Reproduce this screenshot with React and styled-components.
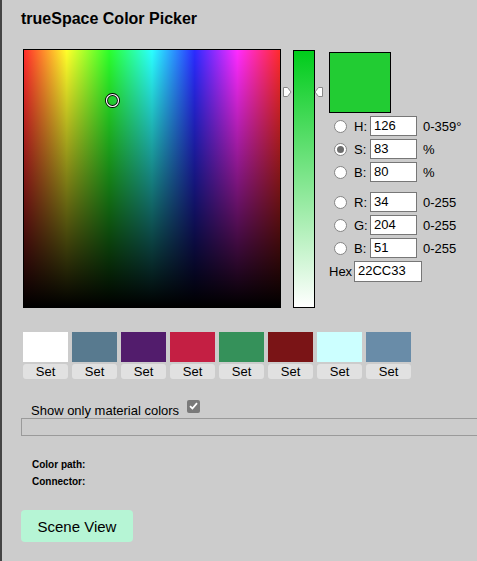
import React from "react";
import styled, { createGlobalStyle } from "styled-components";

const Global = createGlobalStyle`
  html, body { margin: 0; padding: 0; background: #cccccc; overflow: hidden; }
  body { font-family: "Liberation Sans", Arial, sans-serif; color: #000; }
`;

const Page = styled.div`
  min-height: 561px;
  box-sizing: border-box;
  border-left: 2px solid #444444;
  padding-left: 19px;
  overflow: hidden;
`;

const Title = styled.h1`
  margin: 0;
  padding-top: 10px;
  font-size: 16px;
  line-height: 18px;
  font-weight: bold;
`;

const PickerRow = styled.div`
  display: flex;
  align-items: flex-start;
  margin: 21px 0 0 2px;
`;

const Field = styled.div`
  position: relative;
  width: 256px;
  height: 257px;
  border: 1px solid #000;
  background:
    linear-gradient(to bottom, rgba(0,0,0,0), #000),
    linear-gradient(to right,
      rgb(255,43,43) 0%,
      rgb(255,255,43) 16.67%,
      rgb(43,255,43) 33.33%,
      rgb(43,255,255) 50%,
      rgb(43,43,255) 66.67%,
      rgb(255,43,255) 83.33%,
      rgb(255,43,43) 100%);
`;

const Marker = styled.svg`
  position: absolute;
  left: 81px;
  top: 43px;
`;

const SliderWrap = styled.div`
  position: relative;
  margin: 1px 0 0 12px;
  padding: 0;
`;

const Slider = styled.div`
  width: 20px;
  height: 256px;
  border: 1px solid #000;
  background: linear-gradient(to bottom, #00cc1b, #ffffff);
`;

const Arrow = styled.svg`
  position: absolute;
  top: 37px;
  ${(p) => (p.$side === "left" ? "left: -10px;" : "right: -8px;")}
`;

const Side = styled.div`
  display: flex;
  flex-direction: column;
  margin-left: 14px;
  margin-top: 3px;
`;

const Preview = styled.div`
  width: 60px;
  height: 59px;
  border: 1px solid #000;
  background: #22cc33;
  margin-bottom: 3px;
`;

const Row = styled.div`
  display: flex;
  align-items: center;
  height: 20px;
  margin-bottom: 3px;
  margin-top: ${(p) => (p.$gap ? "7px" : "0")};
  font-size: 13px;
`;

const Radio = styled.span`
  box-sizing: border-box;
  width: 13px;
  height: 13px;
  border-radius: 50%;
  border: 1px solid #858585;
  background: #fff;
  margin-left: 5px;
  margin-right: 7px;
  display: flex;
  align-items: center;
  justify-content: center;
  &::after {
    content: "";
    display: ${(p) => (p.$checked ? "block" : "none")};
    width: 7px;
    height: 7px;
    border-radius: 50%;
    background: #6d6d6d;
  }
`;

const Label = styled.span`
  width: 16px;
`;

const Input = styled.div`
  box-sizing: border-box;
  width: ${(p) => p.$w || 47}px;
  height: ${(p) => p.$h || 20}px;
  border: 1px solid #777;
  background: #fff;
  padding: 0 3px;
  font-size: 13px;
  line-height: 18px;
`;

const Unit = styled.span`
  margin-left: 6px;
`;

const HexLabel = styled.span`
  width: 25px;
`;

const Swatches = styled.div`
  display: flex;
  gap: 4px;
  margin: 24px 0 0 2px;
`;

const SwatchCol = styled.div`
  display: flex;
  flex-direction: column;
  gap: 2px;
  width: 45px;
`;

const Swatch = styled.div`
  height: 30px;
  background: ${(p) => p.$c};
`;

const SetBtn = styled.div`
  height: 15px;
  border-radius: 3px;
  background: #e1e1e1;
  font-size: 13px;
  line-height: 15px;
  text-align: center;
`;

const CheckRow = styled.div`
  display: flex;
  align-items: center;
  margin: 24px 0 0 10px;
  height: 14px;
  font-size: 13px;
  gap: 8px;
`;

const Check = styled.span`
  width: 13px;
  height: 13px;
  border-radius: 2px;
  background: #7a7a7a;
  display: flex;
  align-items: center;
  justify-content: center;
  position: relative;
  top: -4px;
`;

const Bar = styled.div`
  box-sizing: border-box;
  width: 480px;
  height: 18px;
  margin-top: 1px;
  border: 1px solid #9a9a9a;
`;

const Info = styled.div`
  margin: 20px 0 0 11px;
  font-size: 10px;
  font-weight: bold;
  line-height: 17px;
`;

const SceneButton = styled.div`
  margin-top: 20px;
  width: 112px;
  height: 32px;
  border-radius: 4px;
  background: #b6f5d5;
  font-size: 15px;
  line-height: 33px;
  text-align: center;
`;

const swatches = ["#ffffff", "#587a8f", "#521c6c", "#c41f43", "#35915a", "#7a1416", "#ccffff", "#698ca8"];

const ArrowIcon = ({ side }) => (
  <Arrow $side={side} width="9" height="10" viewBox="0 0 9 10">
    {side === "left" ? (
      <path d="M0.5 0.5 H4.5 L8 5 L4.5 9.5 H0.5 Z" fill="#fff" stroke="#888" />
    ) : (
      <path d="M8.5 0.5 H4.5 L1 5 L4.5 9.5 H8.5 Z" fill="#fff" stroke="#888" />
    )}
  </Arrow>
);

export default function App() {
  return (
    <Page>
      <Global />
      <Title>trueSpace Color Picker</Title>
      <PickerRow>
        <Field>
          <Marker width="15" height="15" viewBox="0 0 15 15">
            <circle cx="7.5" cy="7.5" r="6" fill="none" stroke="#000" strokeWidth="3" />
            <circle cx="7.5" cy="7.5" r="6" fill="none" stroke="#fff" strokeWidth="1.2" />
          </Marker>
        </Field>
        <SliderWrap>
          <Slider />
          <ArrowIcon side="left" />
          <ArrowIcon side="right" />
        </SliderWrap>
        <Side>
          <Preview />
          <Row>
            <Radio />
            <Label>H:</Label>
            <Input>126</Input>
            <Unit>0-359°</Unit>
          </Row>
          <Row>
            <Radio $checked />
            <Label>S:</Label>
            <Input>83</Input>
            <Unit>%</Unit>
          </Row>
          <Row>
            <Radio />
            <Label>B:</Label>
            <Input>80</Input>
            <Unit>%</Unit>
          </Row>
          <Row $gap>
            <Radio />
            <Label>R:</Label>
            <Input>34</Input>
            <Unit>0-255</Unit>
          </Row>
          <Row>
            <Radio />
            <Label>G:</Label>
            <Input>204</Input>
            <Unit>0-255</Unit>
          </Row>
          <Row>
            <Radio />
            <Label>B:</Label>
            <Input>51</Input>
            <Unit>0-255</Unit>
          </Row>
          <Row>
            <HexLabel>Hex</HexLabel>
            <Input $w={68} $h={21}>22CC33</Input>
          </Row>
        </Side>
      </PickerRow>
      <Swatches>
        {swatches.map((c, i) => (
          <SwatchCol key={i}>
            <Swatch $c={c} />
            <SetBtn>Set</SetBtn>
          </SwatchCol>
        ))}
      </Swatches>
      <CheckRow>
        <span>Show only material colors</span>
        <Check>
          <svg width="9" height="8" viewBox="0 0 9 8">
            <path d="M1 4.2 L3.4 6.5 L8 1.2" fill="none" stroke="#fff" strokeWidth="1.8" />
          </svg>
        </Check>
      </CheckRow>
      <Bar />
      <Info>
        <div>Color path:</div>
        <div>Connector:</div>
      </Info>
      <SceneButton>Scene View</SceneButton>
    </Page>
  );
}
